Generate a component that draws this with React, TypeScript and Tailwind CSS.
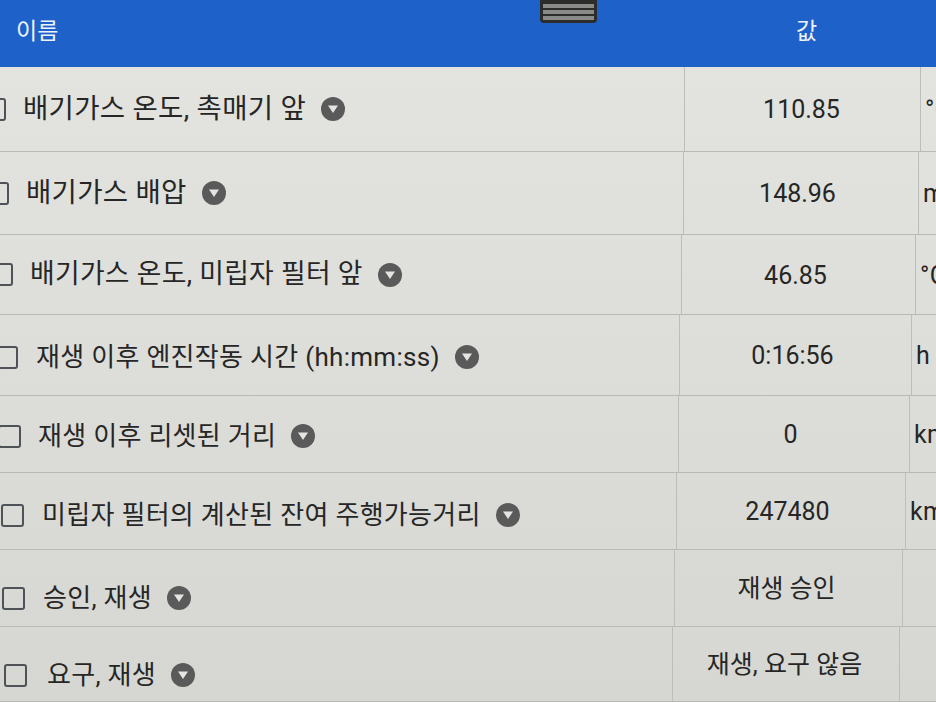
import React from "react";

type Row = {
  name: string;
  value: string;
  unit: string;
  h: number;
  cb: number;
  gap: number;
  nw: number;
  vw: number;
  vc: number;
  ny: number;
  fs: number;
};

const rows: Row[] = [
  { name: "배기가스 온도, 촉매기 앞", value: "110.85", unit: "°C", h: 85, cb: -17, gap: 17, nw: 685, vw: 236, vc: 802, ny: 0, fs: 27.5 },
  { name: "배기가스 배압", value: "148.96", unit: "mbar", h: 83, cb: -14, gap: 17, nw: 684, vw: 235, vc: 798, ny: 0, fs: 27.5 },
  { name: "배기가스 온도, 미립자 필터 앞", value: "46.85", unit: "°C", h: 80, cb: -10, gap: 17, nw: 682, vw: 234, vc: 796, ny: 0, fs: 26.8 },
  { name: "재생 이후 엔진작동 시간 (hh:mm:ss)", value: "0:16:56", unit: "h", h: 81, cb: -5, gap: 18, nw: 680, vw: 232, vc: 793, ny: 2, fs: 26 },
  { name: "재생 이후 리셋된 거리", value: "0", unit: "km", h: 77, cb: -2, gap: 17, nw: 679, vw: 231, vc: 791, ny: 2, fs: 26 },
  { name: "미립자 필터의 계산된 잔여 주행가능거리", value: "247480", unit: "km", h: 77, cb: 1, gap: 18, nw: 677, vw: 229, vc: 788, ny: 4, fs: 26 },
  { name: "승인, 재생", value: "재생 승인", unit: "", h: 77, cb: 2, gap: 18, nw: 675, vw: 228, vc: 787, ny: 10, fs: 26 },
  { name: "요구, 재생", value: "재생, 요구 않음", unit: "", h: 75, cb: 4, gap: 20, nw: 673, vw: 227, vc: 785, ny: 11, fs: 26 },
];

const font = { fontFamily: '"Roboto", "Noto Sans CJK KR", "Noto Sans", sans-serif' };

function Drop() {
  return (
    <span className="ml-[15px] inline-flex h-[24px] w-[24px] shrink-0 items-center justify-center rounded-full bg-[#5a5a5a]">
      <svg width="12" height="10" viewBox="0 0 12 10">
        <path d="M1 1.5 H11 L6 9 Z" fill="#e4e4e0" />
      </svg>
    </span>
  );
}

export default function App() {
  return (
    <div className="h-[702px] w-[936px] overflow-hidden bg-[#d9d9d5]" style={font}>
      <div className="relative flex h-[67px] items-center bg-[#1e62c9] text-[23px] text-[#eef2fb]">
        <div className="w-[685px] pb-[2px] pl-[16px]">이름</div>
        <div className="flex-1 pb-[2px] pl-[111px]">값</div>
        <div className="absolute left-[540px] top-0 flex h-[23px] w-[57px] flex-col justify-center gap-[2px] rounded-b-[4px] bg-[#2c2c2c] px-[3px]">
          <div className="h-[4px] bg-[#8a8a88]" />
          <div className="h-[4px] bg-[#8a8a88]" />
          <div className="h-[4px] bg-[#8a8a88]" />
        </div>
      </div>
      <div className="bg-gradient-to-b from-[#e3e3df] to-[#d6d6d2]">
        {rows.map((r, i) => (
          <div
            key={i}
            className="flex border-b border-[#b9b9b5] tracking-[0.3px] text-[#262626]"
            style={{ height: r.h }}
          >
            <div
              className="flex shrink-0 items-center border-r border-[#bdbdb9]"
              style={{ width: r.nw, paddingTop: r.ny * 2, fontSize: r.fs }}
            >
              <span
                className="h-[23px] w-[23px] shrink-0 rounded-[3px] border-2 border-[#4e5358]"
                style={{ marginLeft: r.cb }}
              />
              <span className="whitespace-nowrap" style={{ marginLeft: r.gap }}>
                {r.name}
              </span>
              <Drop />
            </div>
            <div
              className="flex shrink-0 items-center justify-center whitespace-nowrap border-r border-[#bdbdb9] pt-[2px] text-[25px] tracking-normal"
              style={{ width: r.vw, paddingRight: Math.max(0, 2 * (r.nw + r.vw / 2 - r.vc)) }}
            >
              {r.value}
            </div>
            <div className="flex flex-1 items-center overflow-hidden whitespace-nowrap pl-[4px] pt-[2px] text-[25px]">
              {r.unit}
            </div>
          </div>
        ))}
      </div>
    </div>
  );
}
